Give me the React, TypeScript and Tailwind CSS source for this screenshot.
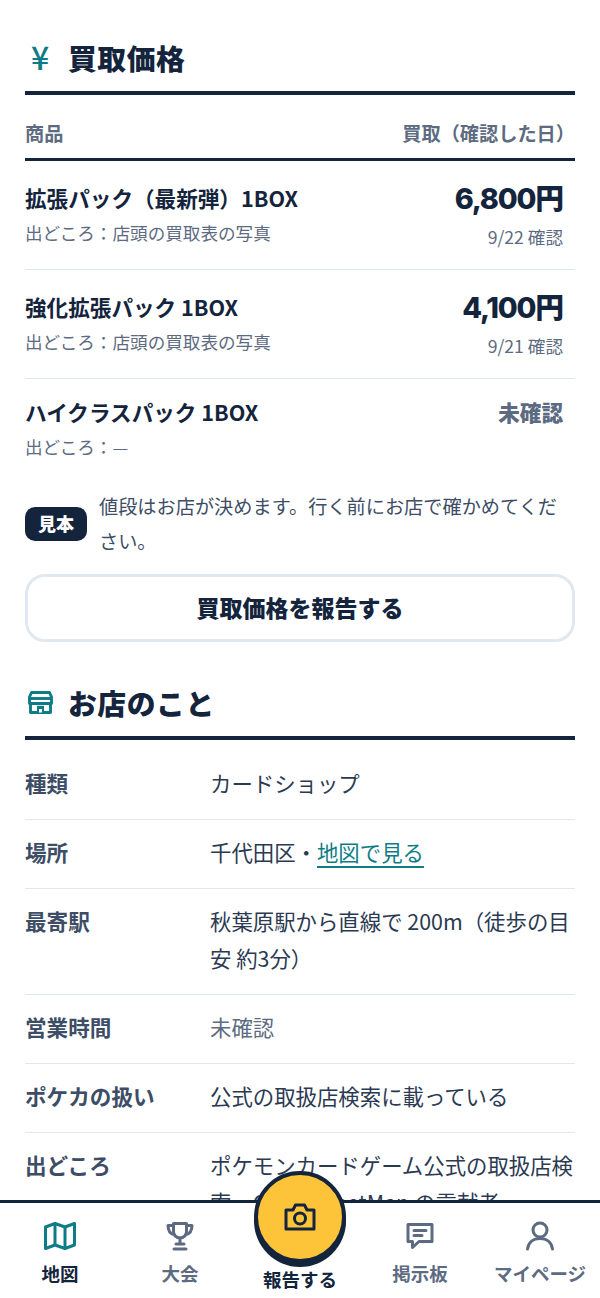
import React from "react";

const ff = { fontFamily: '"Noto Sans CJK JP", "Noto Sans", sans-serif' };
const priceFont = { fontFamily: 'Inter, "Noto Sans CJK JP", sans-serif' };

function Heading({ icon, children }: { icon: React.ReactNode; children: React.ReactNode }) {
  return (
    <div className="flex items-start h-[54px] border-b-4 border-[#14243d] gap-[15px] pl-[2px]">
      <span className="w-[26px] h-[36px] flex items-center justify-center text-[#0e7c86]">{icon}</span>
      <h2 className="text-[28.8px] leading-[33px] font-black text-[#14243d] tracking-[0.02em]">{children}</h2>
    </div>
  );
}

function PriceRow({ name, price, date, src, last }: { name: string; price: string; date?: string; src: string; last?: boolean }) {
  return (
    <div className={`flex justify-between pr-[12px] ${last ? "pt-[17px] pb-[12px]" : "pt-[21px] pb-[19px] border-b border-[#e2e8f0]"}`}>
      <div className="min-w-0">
        <div className="text-[21.6px] leading-[32px] font-bold text-[#14243d]">{name}</div>
        <div className="text-[17.6px] leading-[28px] mt-[5px] text-[#5d6b82]">{src}</div>
      </div>
      <div className="text-right">
        {date ? (
          <>
            <div className="text-[28.8px] leading-[34px] tracking-[-0.04em] font-extrabold text-[#14243d]" style={priceFont}>{price}</div>
            <div className="text-[17.6px] leading-[26px] mt-[8px] text-[#5d6b82]">{date}</div>
          </>
        ) : (
          <div className="text-[21.6px] leading-[32px] font-black text-[#5d6b82]">{price}</div>
        )}
      </div>
    </div>
  );
}

function InfoRow({ label, children, last }: { label: string; children: React.ReactNode; last?: boolean }) {
  return (
    <div className={`flex pt-[13px] pb-[18px] ${last ? "" : "border-b border-[#e2e8f0]"}`}>
      <div className="w-[185px] shrink-0 text-[21.6px] leading-[37px] font-bold text-[#3d4d66]">{label}</div>
      <div className="flex-1 text-[21.4px] leading-[37px] text-[#2b3a52]">{children}</div>
    </div>
  );
}

function NavItem({ label, active, children }: { label: string; active?: boolean; children: React.ReactNode }) {
  return (
    <div className="flex-1 flex flex-col items-center pt-[15px]">
      <div className="h-[36px] w-[36px] flex items-center justify-center">{children}</div>
      <div className={`text-[18.5px] leading-[28px] mt-[5px] font-bold whitespace-nowrap ${active ? "text-[#14243d]" : "text-[#5d6b82]"}`}>{label}</div>
    </div>
  );
}

export default function App() {
  return (
    <div className="relative w-[600px] h-[1298px] overflow-hidden bg-white" style={ff}>
      <main className="px-[25px] pt-[41px]">
        <Heading icon={<span className="text-[32px] leading-none font-medium -translate-y-[3px]">¥</span>}>買取価格</Heading>
        <div className="flex justify-between items-start h-[66px] pt-[24px] border-b-[3px] border-[#14243d] text-[19.2px] leading-[28px] font-bold text-[#5d6b82]">
          <span>商品</span>
          <span>買取（確認した日）</span>
        </div>
        <PriceRow name="拡張パック（最新弾）1BOX" price="6,800円" date="9/22 確認" src="出どころ：店頭の買取表の写真" />
        <PriceRow name="強化拡張パック 1BOX" price="4,100円" date="9/21 確認" src="出どころ：店頭の買取表の写真" />
        <PriceRow name="ハイクラスパック 1BOX" price="未確認" src="出どころ：—" last />
        <div className="flex items-center gap-[12px] mt-[16px]">
          <span className="shrink-0 w-[62px] h-[34px] rounded-[10px] bg-[#14243d] text-white text-[18px] font-black flex items-center justify-center">見本</span>
          <p className="text-[19.2px] leading-[34.5px] text-[#3d4d66]">値段はお店が決めます。行く前にお店で確かめてください。</p>
        </div>
        <button className="mt-[16px] w-full h-[68px] pb-[2px] rounded-[20px] border-[3px] border-[#e2e8f0] bg-white text-[23px] font-extrabold text-[#14243d]">買取価格を報告する</button>

        <div className="mt-[44px]">
          <Heading
            icon={
              <svg className="-translate-y-[2px]" width="25" height="23" viewBox="0 0 25 23" fill="none" stroke="currentColor" strokeWidth="2.9" strokeLinejoin="round">
                <path d="M3.500 1.500h18l2 4.500v6.500H1.500V6z" />
                <path d="M2.500 12v9.500h20V12" />
                <path d="M1.500 7.500h22" />
                <path d="M9 21.500V14.800h7v6.700" fill="currentColor" stroke="none" />
                <path d="M11 21.500v-3.500h3v3.500" fill="#fff" stroke="none" />
              </svg>
            }
          >
            お店のこと
          </Heading>
        </div>
        <div className="mt-[11px]">
          <InfoRow label="種類">カードショップ</InfoRow>
        </div>
        <InfoRow label="場所">
          千代田区・<span className="text-[#0e7c86] underline underline-offset-[5px]">地図で見る</span>
        </InfoRow>
        <InfoRow label="最寄駅">秋葉原駅から直線で 200m（徒歩の目安 約3分）</InfoRow>
        <InfoRow label="営業時間"><span className="text-[#5d6b82]">未確認</span></InfoRow>
        <InfoRow label="ポケカの扱い">公式の取扱店検索に載っている</InfoRow>
        <InfoRow label="出どころ" last>ポケモンカードゲーム公式の取扱店検索、OpenStreetMap の貢献者</InfoRow>
      </main>

      <nav className="absolute left-0 right-0 bottom-0 h-[98px] bg-white border-t-[3px] border-[#14243d] flex">
        <NavItem label="地図" active>
          <svg width="34" height="30" viewBox="0 0 34 30" fill="none" stroke="#0e7c86" strokeWidth="3" strokeLinejoin="round">
            <path d="M2.500 6 12 2.500l10 3.500 9.500-3.500v21.500L22 27.500l-10-3.500-9.500 3.500z" />
            <path d="M12 2.500V24M22 6v21.500" />
          </svg>
        </NavItem>
        <NavItem label="大会">
          <svg width="28" height="30" viewBox="0 0 28 30" fill="none" stroke="#5d6b82" strokeWidth="3" strokeLinejoin="round" strokeLinecap="round">
            <path d="M7.500 2.500h13v8a6.500 6.500 0 0 1-13 0z" />
            <path d="M7.500 4.500H2c0 5 1.500 8 6 9M20.500 4.500H26c0 5-1.500 8-6 9M14 17v6M10 23h8M8 28h12" />
          </svg>
        </NavItem>
        <div className="flex-1 flex flex-col items-center justify-end pb-[5px]">
          <div className="text-[18.5px] leading-[28px] font-bold text-[#14243d] whitespace-nowrap">報告する</div>
        </div>
        <NavItem label="掲示板">
          <svg width="28" height="28" viewBox="0 0 28 28" fill="none" stroke="#5d6b82" strokeWidth="3" strokeLinejoin="round" strokeLinecap="round">
            <path d="M2 2.500h24v17H13l-6.500 6v-6H2z" />
            <path d="M8 8.500h12M8 13.500h8" />
          </svg>
        </NavItem>
        <NavItem label="マイページ">
          <svg width="30" height="30" viewBox="0 0 30 30" fill="none" stroke="#5d6b82" strokeWidth="3" strokeLinecap="round">
            <circle cx="15" cy="9" r="7" />
            <path d="M2.500 28c1-7 6-10.500 12.500-10.500S26.500 21 27.500 28" />
          </svg>
        </NavItem>
      </nav>
      <div className="absolute left-[254px] top-[1171px] w-[92px] h-[92px] rounded-full bg-[#fdc43a] border-[4px] border-[#14243d] shadow-[0_4px_0_#14243d] flex items-center justify-center">
        <svg width="32" height="28" viewBox="0 0 32 28" fill="none" stroke="#14243d" strokeWidth="3" strokeLinejoin="round">
          <path d="M2 7h7l2.500-5h9L23 7h7v19H2z" />
          <circle cx="16" cy="15.500" r="5.500" />
        </svg>
      </div>
    </div>
  );
}
